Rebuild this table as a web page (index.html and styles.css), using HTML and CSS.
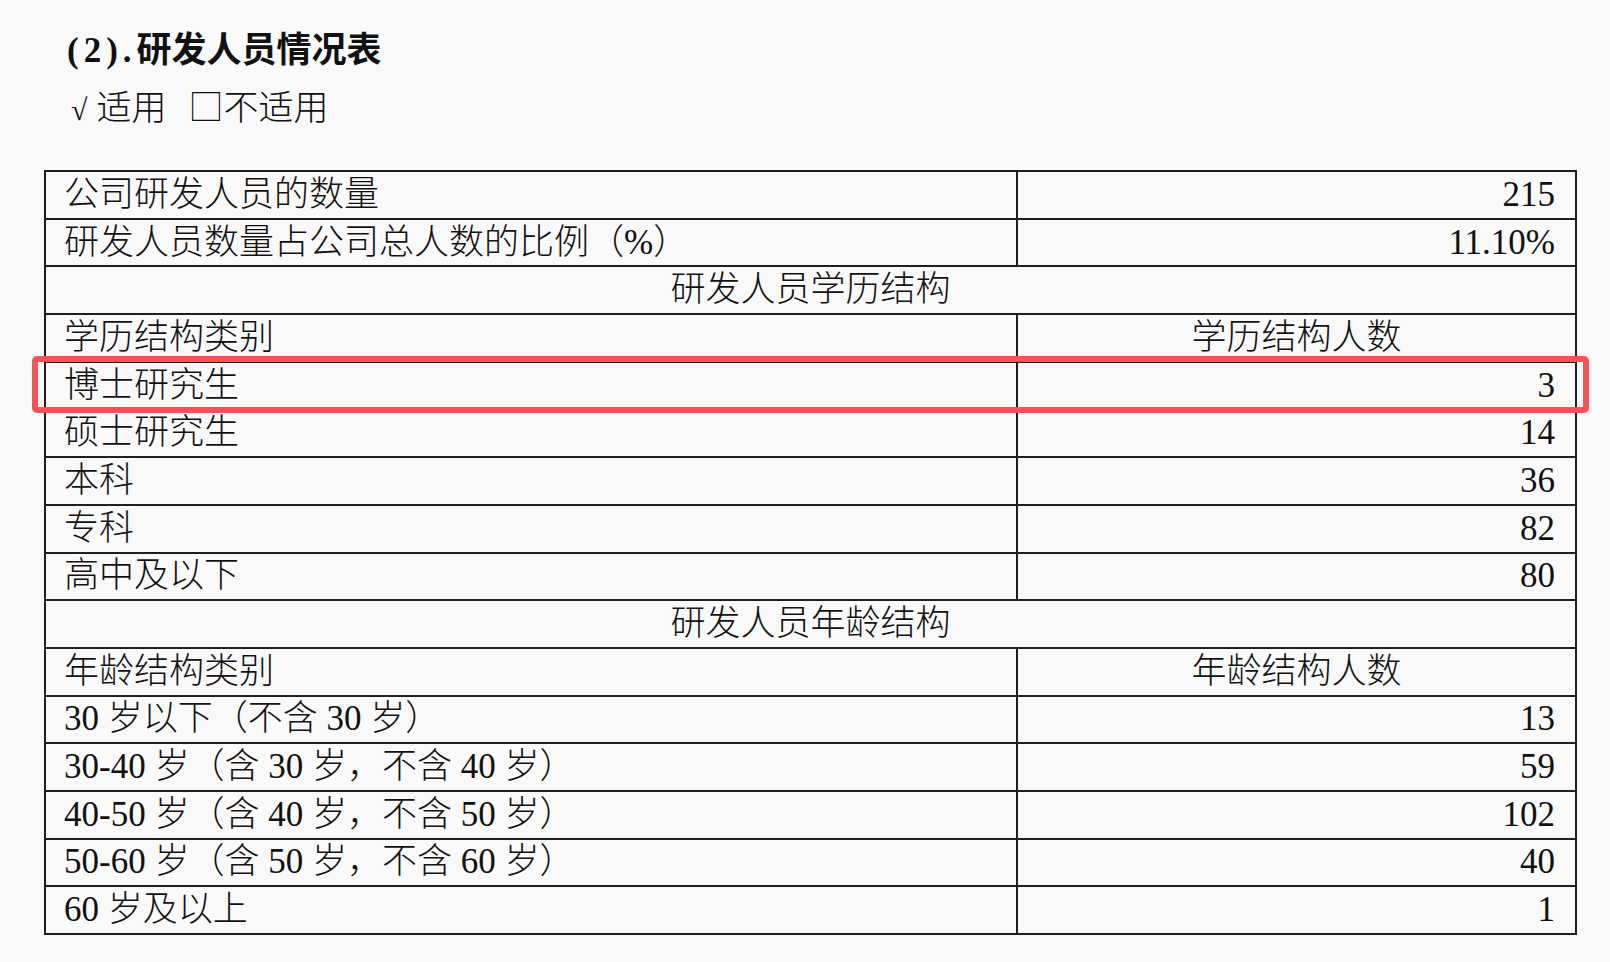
FILE: index.html
```html
<!DOCTYPE html>
<html lang="zh-CN">
<head>
<meta charset="utf-8">
<title>研发人员情况表</title>
<link rel="stylesheet" href="styles.css">
</head>
<body>
<main class="page">
  <h2 class="title"><span class="title-num">(2).</span>研发人员情况表</h2>
  <p class="applicable"><span class="check">√</span>适用<span class="box-mark">□</span>不适用</p>
  <div class="table-wrap">
    <table class="rd-table">
      <colgroup><col class="col-label"><col class="col-value"></colgroup>
      <tbody>
        <tr><td>公司研发人员的数量</td><td class="num">215</td></tr>
        <tr><td>研发人员数量占公司总人数的比例（%）</td><td class="num">11.10%</td></tr>
        <tr><td colspan="2" class="section">研发人员学历结构</td></tr>
        <tr><td>学历结构类别</td><td class="center">学历结构人数</td></tr>
        <tr><td>博士研究生</td><td class="num">3</td></tr>
        <tr><td>硕士研究生</td><td class="num">14</td></tr>
        <tr><td>本科</td><td class="num">36</td></tr>
        <tr><td>专科</td><td class="num">82</td></tr>
        <tr><td>高中及以下</td><td class="num">80</td></tr>
        <tr><td colspan="2" class="section">研发人员年龄结构</td></tr>
        <tr><td>年龄结构类别</td><td class="center">年龄结构人数</td></tr>
        <tr><td>30 岁以下（不含 30 岁）</td><td class="num">13</td></tr>
        <tr><td>30-40 岁（含 30 岁，不含 40 岁）</td><td class="num">59</td></tr>
        <tr><td>40-50 岁（含 40 岁，不含 50 岁）</td><td class="num">102</td></tr>
        <tr><td>50-60 岁（含 50 岁，不含 60 岁）</td><td class="num">40</td></tr>
        <tr><td>60 岁及以上</td><td class="num">1</td></tr>
      </tbody>
    </table>
    <div class="highlight"></div>
  </div>
</main>
</body>
</html>
```

FILE: styles.css
```css
html, body {
  margin: 0;
  padding: 0;
  background: #f9f9f9;
}

body {
  font-family: "Liberation Serif", "Noto Sans CJK SC", serif;
  color: #111;
}

.page {
  padding: 26px 0 0 44px;
}

.title {
  margin: 0 0 0 23px;
  font-size: 35px;
  line-height: 42px;
  font-weight: 700;
  font-family: "Noto Sans CJK SC", sans-serif;
  color: #111;
}

.title-num {
  font-family: "Liberation Serif", serif;
  font-weight: 700;
  letter-spacing: 5px;
}

.applicable {
  margin: 12px 0 0 27px;
  font-size: 35px;
  line-height: 42px;
  font-weight: 300;
}

.check {
  font-family: "Liberation Serif", serif;
  font-size: 30px;
  margin-right: 9px;
}

.box-mark {
  margin: 0 0 0 22px;
  font-family: "Noto Sans CJK SC", sans-serif;
}

.table-wrap {
  position: relative;
  margin-top: 39px;
  width: 1533px;
}

.rd-table {
  border-collapse: collapse;
  width: 1533px;
  table-layout: fixed;
  font-size: 35px;
  font-weight: 300;
}

.col-label {
  width: 972px;
}

.rd-table tr {
  height: 47.7px;
}

.rd-table td {
  border: 2px solid #1e1e1e;
  padding: 0 20px 0 18px;
  line-height: 40px;
  white-space: nowrap;
  vertical-align: middle;
}

.rd-table td.num {
  text-align: right;
}

.rd-table td.center,
.rd-table td.section {
  text-align: center;
  padding: 0;
}

.highlight {
  position: absolute;
  left: -12px;
  top: 186px;
  width: 1545px;
  height: 45px;
  border: 6px solid #f65357;
  border-radius: 5px;
  pointer-events: none;
}
```
